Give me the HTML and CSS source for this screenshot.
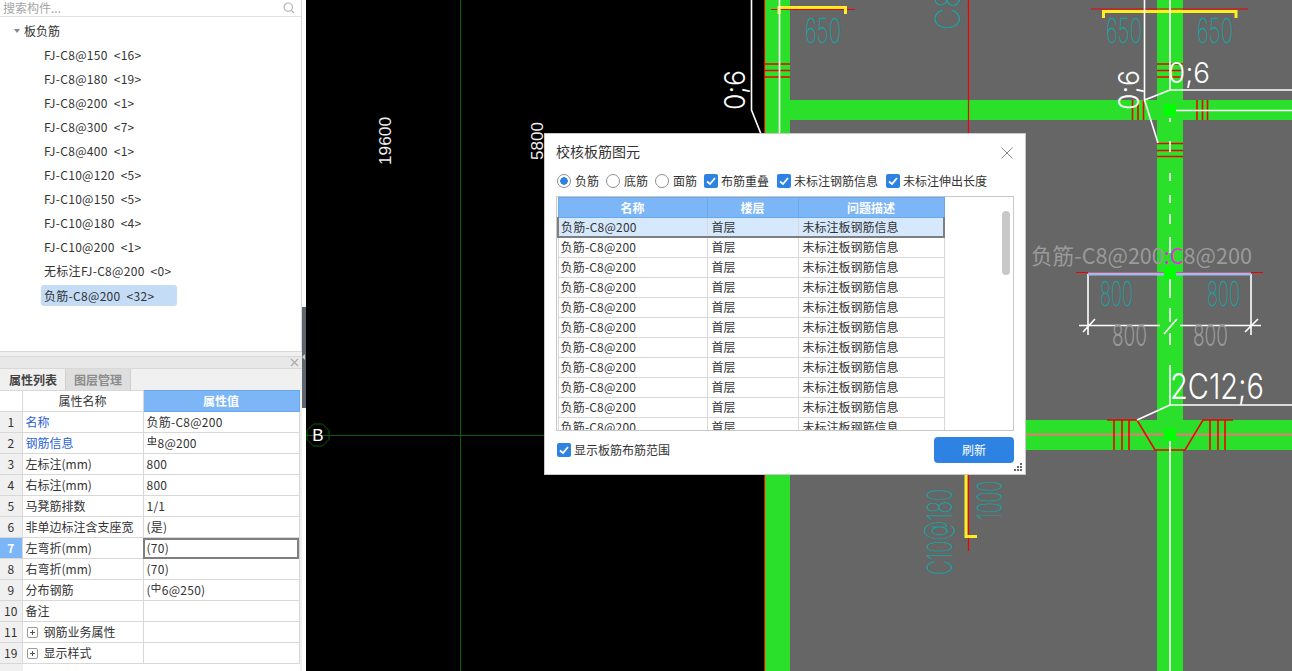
FILE: index.html
```html
<!DOCTYPE html>
<html lang="zh-CN">
<head>
<meta charset="utf-8">
<title>校核板筋图元</title>
<link rel="stylesheet" href="styles.css">
</head>
<body>
<div class="app">
  <aside class="side">
    <section class="tree-panel">
      <div class="search">
        <span class="search-text">搜索构件...</span>
        <svg class="search-icon" width="12" height="12" viewBox="0 0 12 12"><circle cx="5.2" cy="5.2" r="4.2"/><path d="M8.2 8.2L11 11"/></svg>
      </div>
      <div class="tree">
        <div class="tree-root"><span class="caret"></span>板负筋</div>
        <div class="tree-item">FJ-C8@150 &lt;16&gt;</div>
        <div class="tree-item">FJ-C8@180 &lt;19&gt;</div>
        <div class="tree-item">FJ-C8@200 &lt;1&gt;</div>
        <div class="tree-item">FJ-C8@300 &lt;7&gt;</div>
        <div class="tree-item">FJ-C8@400 &lt;1&gt;</div>
        <div class="tree-item">FJ-C10@120 &lt;5&gt;</div>
        <div class="tree-item">FJ-C10@150 &lt;5&gt;</div>
        <div class="tree-item">FJ-C10@180 &lt;4&gt;</div>
        <div class="tree-item">FJ-C10@200 &lt;1&gt;</div>
        <div class="tree-item">无标注FJ-C8@200 &lt;0&gt;</div>
        <div class="tree-item selected">负筋-C8@200 &lt;32&gt;</div>
      </div>
    </section>
    <section class="prop-panel">
      <div class="prop-strip"><svg width="9" height="9" viewBox="0 0 9 9"><path d="M1 1L8 8M8 1L1 8"/></svg></div>
      <div class="tabs">
        <div class="tab active">属性列表</div>
        <div class="tab">图层管理</div>
      </div>
      <table class="props">
        <colgroup><col class="c-no"><col class="c-name"><col class="c-val"></colgroup>
        <thead><tr><th class="no"></th><th class="name-h">属性名称</th><th class="val-h">属性值</th></tr></thead>
        <tbody>
          <tr><td class="no">1</td><td class="link">名称</td><td class="val">负筋-C8@200</td></tr>
          <tr><td class="no">2</td><td class="link">钢筋信息</td><td class="val"><svg class="bar" width="10" height="10" viewBox="0 0 10 10"><path d="M5 0V8M1.5 2.5H8.5V6H1.5ZM.5 8.5H9.5"/></svg>8@200</td></tr>
          <tr><td class="no">3</td><td>左标注(mm)</td><td class="val">800</td></tr>
          <tr><td class="no">4</td><td>右标注(mm)</td><td class="val">800</td></tr>
          <tr><td class="no">5</td><td>马凳筋排数</td><td class="val">1/1</td></tr>
          <tr><td class="no">6</td><td>非单边标注含支座宽</td><td class="val">(是)</td></tr>
          <tr><td class="no current">7</td><td>左弯折(mm)</td><td class="val editing">(70)</td></tr>
          <tr><td class="no">8</td><td>右弯折(mm)</td><td class="val">(70)</td></tr>
          <tr><td class="no">9</td><td>分布钢筋</td><td class="val">(<svg class="bar" width="10" height="10" viewBox="0 0 10 10"><path d="M5 0V9.5M1 2.5H9V6.5H1Z"/></svg>6@250)</td></tr>
          <tr><td class="no">10</td><td>备注</td><td></td></tr>
          <tr><td class="no">11</td><td><span class="plus"></span>钢筋业务属性</td><td></td></tr>
          <tr><td class="no">19</td><td><span class="plus"></span>显示样式</td><td></td></tr>
        </tbody>
      </table>
      <div class="prop-rest"><span></span></div>
    </section>
  </aside>
  <div class="splitter"><div class="split-handle"><i></i></div></div>
  <main class="canvas">
    <svg class="drawing" width="986" height="671" viewBox="306 0 986 671">
      <rect x="306" y="0" width="986" height="671" fill="#000"/>
      <rect x="765" y="0" width="527" height="671" fill="#666"/>
      <!-- axes -->
      <path class="axis" d="M460.5 0V671M306 435.5H765"/>
      <polygon class="axis" points="313.5,424 322.5,424 329,430.500 329,439.500 322.5,446 313.5,446 307,439.500 307,430.500"/>
      <text class="bubble" x="318" y="441">B</text>
      <!-- beams -->
      <g fill="#2be02b">
        <rect x="765" y="0" width="25" height="671"/>
        <rect x="1157" y="0" width="26" height="671"/>
        <rect x="790" y="100" width="502" height="20"/>
        <rect x="765" y="420" width="527" height="30"/>
      </g>
      <path class="pink" d="M765 434.500H1292"/>
      <!-- red lines -->
      <path class="red" d="M764.500 0V671M968.500 0V134M968.500 475V551"/>
      <path class="red th" d="M765 64H790M765 70.500H790M765 77H790M1157 64H1183M1157 70.500H1183M1157 77H1183M1157 143.500H1183M1157 150.500H1183M1157 156.500H1183"/>
      <path class="red th" d="M1132.500 100V120M1138 100V120M1143.500 100V120M1197 100V120M1202.500 100V120M1207.500 100V120"/>
      <path class="red" d="M771 9.500H855M1091 9H1248M1076 272.500H1263"/>
      <path class="red th" d="M1107 420H1137L1155 450H1185L1203 420H1233M1114 420V450M1122 420V450M1129 420V450M1210 420V450M1218 420V450M1225 420V450"/>
      <!-- yellow brackets -->
      <path class="yellow" d="M779 14V7.500H845.500V14M1103.500 18V11.500H1236V18M966 475V536.500H977"/>
      <!-- white lines -->
      <path class="white" d="M779.500 0V134M1170 0V90M1176 110.500H1292M751.500 0V110L761 134M1144.500 0V100L1170 90H1292M1144.500 100L1158 143M1170 365V405H1292M1170 405L1137 420M1170 441V671M1088 274V335M1251 274V335M1079 325.500H1160M1180 325.500H1261M1083 332L1095 319M1164 334L1177 319M1245 332L1258 319"/>
      <path class="white dash" d="M1170 118V122M1170 141V152M1170 173V181M1170 195V203M1170 214V224M1170 237V253M1170 279V298M1170 308V322M1170 333V345"/>
      <path class="blue-line" d="M1088 274H1251"/>
      <!-- nodes -->
      <g fill="#00ff00">
        <rect x="1164" y="104" width="12" height="12"/>
        <rect x="1164" y="267" width="12" height="12"/>
        <rect x="1164" y="429" width="12" height="12"/>
      </g>
      <!-- dimensions -->
      <text class="dim" transform="translate(391 165) rotate(-90)" textLength="48" lengthAdjust="spacingAndGlyphs">19600</text>
      <text class="dim" transform="translate(543 160) rotate(-90)" textLength="38" lengthAdjust="spacingAndGlyphs">5800</text>
      <!-- teal -->
      <g class="teal">
        <text x="805" y="43" textLength="36" lengthAdjust="spacingAndGlyphs">650</text>
        <text x="1106" y="43" textLength="36" lengthAdjust="spacingAndGlyphs">650</text>
        <text x="1197" y="43" textLength="36" lengthAdjust="spacingAndGlyphs">650</text>
        <text x="1100" y="306" textLength="33" lengthAdjust="spacingAndGlyphs">800</text>
        <text x="1207" y="306" textLength="33" lengthAdjust="spacingAndGlyphs">800</text>
        <text transform="translate(960 30) rotate(-90)" textLength="40" lengthAdjust="spacingAndGlyphs">C8</text>
        <text transform="translate(952 575) rotate(-90)" textLength="86" lengthAdjust="spacingAndGlyphs">C10@180</text>
        <text transform="translate(1002 520) rotate(-90)" textLength="39" lengthAdjust="spacingAndGlyphs">1000</text>
      </g>
      <!-- white annotations -->
      <g class="anno">
        <text x="1168" y="83" textLength="42" lengthAdjust="spacingAndGlyphs">0;6</text>
        <text transform="translate(1139 110) rotate(-90)" textLength="40" lengthAdjust="spacingAndGlyphs">0;6</text>
        <text transform="translate(745 110) rotate(-90)" textLength="40" lengthAdjust="spacingAndGlyphs">0;6</text>
        <text class="anno-lg" x="1170" y="399" textLength="94" lengthAdjust="spacingAndGlyphs">2C12;6</text>
      </g>
      <text class="grey" x="1031" y="264" textLength="221" lengthAdjust="spacingAndGlyphs">负筋-C8@200<tspan fill="#e22ee2">:C</tspan>8@200</text>
      <text class="grey-num" x="1112" y="346" textLength="35" lengthAdjust="spacingAndGlyphs">800</text>
      <text class="grey-num" x="1193" y="346" textLength="35" lengthAdjust="spacingAndGlyphs">800</text>
    </svg>

    <div class="dialog">
      <div class="dlg-title">
        <span class="dlg-name">校核板筋图元</span>
        <svg class="dlg-close" width="12" height="12" viewBox="0 0 12 12"><path d="M.5 .5L11.500 11.500M11.500 .5L.5 11.500"/></svg>
      </div>
      <div class="dlg-options">
        <label class="opt"><span class="radio on"></span>负筋</label>
        <label class="opt"><span class="radio"></span>底筋</label>
        <label class="opt"><span class="radio"></span>面筋</label>
        <label class="opt wide"><span class="check"><svg width="14" height="14" viewBox="0 0 14 14"><path d="M3 7.500L6 10L11 4"/></svg></span>布筋重叠</label>
        <label class="opt wide"><span class="check"><svg width="14" height="14" viewBox="0 0 14 14"><path d="M3 7.500L6 10L11 4"/></svg></span>未标注钢筋信息</label>
        <label class="opt wide"><span class="check"><svg width="14" height="14" viewBox="0 0 14 14"><path d="M3 7.500L6 10L11 4"/></svg></span>未标注伸出长度</label>
      </div>
      <div class="grid-box">
        <table class="grid">
          <colgroup><col class="g1"><col class="g2"><col class="g3"></colgroup>
          <thead><tr><th>名称</th><th>楼层</th><th>问题描述</th></tr></thead>
          <tbody>
            <tr class="sel"><td>负筋-C8@200</td><td>首层</td><td>未标注板钢筋信息</td></tr>
            <tr><td>负筋-C8@200</td><td>首层</td><td>未标注板钢筋信息</td></tr>
            <tr><td>负筋-C8@200</td><td>首层</td><td>未标注板钢筋信息</td></tr>
            <tr><td>负筋-C8@200</td><td>首层</td><td>未标注板钢筋信息</td></tr>
            <tr><td>负筋-C8@200</td><td>首层</td><td>未标注板钢筋信息</td></tr>
            <tr><td>负筋-C8@200</td><td>首层</td><td>未标注板钢筋信息</td></tr>
            <tr><td>负筋-C8@200</td><td>首层</td><td>未标注板钢筋信息</td></tr>
            <tr><td>负筋-C8@200</td><td>首层</td><td>未标注板钢筋信息</td></tr>
            <tr><td>负筋-C8@200</td><td>首层</td><td>未标注板钢筋信息</td></tr>
            <tr><td>负筋-C8@200</td><td>首层</td><td>未标注板钢筋信息</td></tr>
            <tr><td>负筋-C8@200</td><td>首层</td><td>未标注板钢筋信息</td></tr>
          </tbody>
        </table>
        <div class="scrollbar"></div>
      </div>
      <div class="dlg-foot">
        <label class="opt"><span class="check"><svg width="14" height="14" viewBox="0 0 14 14"><path d="M3 7.500L6 10L11 4"/></svg></span>显示板筋布筋范围</label>
        <button class="refresh" type="button">刷新</button>
      </div>
      <svg class="grip" width="8" height="8" viewBox="0 0 8 8"><path d="M6 0h2v2H6zM3 3h2v2H3zM6 3h2v2H6zM0 6h2v2H0zM3 6h2v2H3zM6 6h2v2H6z"/></svg>
    </div>
  </main>
</div>
</body>
</html>
```
FILE: styles.css
```css
* { box-sizing: border-box; }
html, body { margin: 0; padding: 0; height: 100%; overflow: hidden; }
body {
  font-family: "Noto Sans CJK SC", "Noto Sans", sans-serif;
  font-size: 12px;
  color: #333;
  background: #f0f0f0;
}
.app { display: flex; width: 1292px; height: 671px; }

/* left side */
.side { width: 302px; flex: none; display: flex; flex-direction: column; background: #f0f0f0; }
.tree-panel {
  height: 352px;
  background: #fff;
  border-right: 1px solid #d8d8d8;
  border-bottom: 1px solid #d8d8d8;
}
.search {
  height: 17px;
  display: flex;
  align-items: center;
  justify-content: space-between;
  padding: 0 6px 0 3px;
  border-bottom: 1px solid #e2e2e2;
}
.search-text { color: #a5a5a5; line-height: 16px; }
.search-icon { fill: none; stroke: #b5b5b5; stroke-width: 1.2; }
.tree { padding-top: 2px; }
.tree-root, .tree-item { height: 24px; line-height: 24px; white-space: pre-wrap; }
.tree-root { padding-left: 14px; display: flex; align-items: center; }
.caret {
  width: 0; height: 0;
  margin-right: 4px;
  border-left: 3px solid transparent;
  border-right: 3px solid transparent;
  border-top: 4px solid #888;
}
.tree-item { margin-left: 41px; padding-left: 3px; width: 136px; word-spacing: 3px; letter-spacing: .3px; }
.tree-item.selected { background: #c4dcf6; border-radius: 3px; height: 21px; line-height: 21px; margin-top: 2px; }

.prop-panel { margin-top: 4px; flex: 1; display: flex; flex-direction: column; border-top: 1px solid #d8d8d8; min-height: 0; }
.prop-strip {
  height: 11px;
  background: #e8e8e8;
  display: flex;
  justify-content: flex-end;
  align-items: center;
  padding-right: 3px;
}
.prop-strip svg { fill: none; stroke: #aaa; stroke-width: 1.2; }
.tabs { height: 22px; display: flex; background: #f0f0f0; border-top: 1px solid #d8d8d8; padding-left: 1px; }
.tab {
  width: 65px;
  text-align: center;
  line-height: 21px;
  font-weight: 700;
  color: #8c8c8c;
  background: #dedede;
  border-right: 1px solid #d0d0d0;
}
.tab.active { background: #f0f0f0; color: #444; width: 65px; border-right: 1px solid #d0d0d0; }

.props { border-collapse: collapse; table-layout: fixed; width: 299px; background: #fff; }
.c-no { width: 22px; } .c-name { width: 121px; } .c-val { width: 156px; }
.props th, .props td {
  height: 21px;
  padding: 0 0 0 3px;
  border: 1px solid #d8d8d8;
  font-weight: 400;
  white-space: nowrap;
  overflow: hidden;
  line-height: 18px;
}
.props th { text-align: center; padding: 0; }
.props .no { background: #f0f0f0; text-align: center; padding: 0; border-left: 0; }
.props thead .no { background: #fff; }
.props .val-h { background: #7cb6f7; color: #fff; font-weight: 700; border-color: #6aa8ee; }
.props .link { color: #2a62d9; }
.props .val { letter-spacing: .25px; }
.props .current { background: #7cb6f7; color: #fff; font-weight: 700; }
.props .editing { outline: 2px solid #7f7f7f; outline-offset: -2px; }
.bar { fill: none; stroke: #444; stroke-width: 1; vertical-align: 2px; margin-right: 1px; }
.plus {
  display: inline-block;
  width: 11px; height: 11px;
  margin: 0 6px 0 1px;
  vertical-align: -1px;
  border: 1px solid #999;
  border-radius: 2px;
  background:
    linear-gradient(#555, #555) center / 5px 1px no-repeat,
    linear-gradient(#555, #555) center / 1px 5px no-repeat;
}
.prop-rest { flex: 1; display: flex; width: 300px; background: #fff; }
.prop-rest span { width: 23px; background: #f0f0f0; }

.splitter { width: 4px; flex: none; background: #fff; position: relative; }
.split-handle { position: absolute; left: 0; top: 307px; width: 4px; height: 101px; background: #5c6670; display: flex; align-items: center; }
.split-handle i { border-right: 3px solid #c8c8c8; border-top: 3px solid transparent; border-bottom: 3px solid transparent; margin-top: -2px; }

/* canvas */
.canvas { flex: 1; position: relative; overflow: hidden; background: #000; }
.drawing { display: block; font-family: "Liberation Sans", sans-serif; }
.axis { fill: none; stroke: #0b5c0b; stroke-width: 1; }
.bubble { fill: #fff; font-size: 17px; text-anchor: middle; }
.pink { stroke: #e87878; stroke-width: 2; }
.red { fill: none; stroke: #f00000; stroke-width: 1.2; }
.red.th { stroke-width: 1.6; }
.yellow { fill: none; stroke: #ffee22; stroke-width: 3; }
.white { fill: none; stroke: #fff; stroke-width: 1.6; }
.dash { stroke-width: 1.6; }
.blue-line { stroke: #9dbcf0; stroke-width: 3; }
.dim { fill: #eee; font-size: 17px; }
.teal text { fill: #0fa8a8; stroke: #0fa8a8; stroke-width: .3; font-family: "Inter", "Roboto", sans-serif; font-weight: 100; font-size: 34px; }
.anno text { fill: #fff; font-family: "Inter", sans-serif; font-weight: 300; font-size: 29px; }
.anno .anno-lg { font-size: 36px; }
.grey { fill: #9a9a9a; font-size: 22px; font-family: "Noto Sans CJK SC", sans-serif; }
.grey-num { fill: #9a9a9a; font-family: "Inter", sans-serif; font-weight: 300; font-size: 30px; }

/* dialog */
.dialog {
  position: absolute;
  left: 238px; top: 133px;
  width: 482px; height: 342px;
  background: #fff;
  border: 1px solid #c8c8c8;
  padding: 0 11px;
  display: flex;
  flex-direction: column;
}
.dlg-title {
  height: 37px;
  flex: none;
  display: flex;
  align-items: center;
  justify-content: space-between;
  font-size: 14px;
  padding-right: 1px;
}
.dlg-name { padding-bottom: 3px; }
.dlg-close { fill: none; stroke: #888; stroke-width: 1; }
.dlg-options { display: flex; align-items: center; height: 19px; padding-left: 1px; }
.opt { display: flex; align-items: center; line-height: 16px; margin-right: 7px; white-space: nowrap; }
.opt.wide { margin-right: 8px; }
.radio {
  width: 14px; height: 14px;
  border: 1px solid #8f8f8f;
  border-radius: 50%;
  margin-right: 4px;
  flex: none;
  background: #fff;
}
.radio.on { background: radial-gradient(circle, #2e82e2 0 3.5px, #fff 4px); }
.check { width: 14px; height: 14px; background: #2e82e2; border-radius: 2px; margin-right: 3px; flex: none; }
.check svg { display: block; fill: none; stroke: #fff; stroke-width: 1.8; }
.grid-box {
  position: relative;
  margin-top: 6px;
  height: 235px;
  flex: none;
  border: 1px solid #c8c8c8;
  overflow: hidden;
}
.grid { border-collapse: collapse; table-layout: fixed; width: 386px; }
.g1 { width: 149px; } .g2 { width: 91px; } .g3 { width: 146px; }
.grid th {
  height: 20px;
  background: #7cb6f7;
  color: #fff;
  font-weight: 700;
  border: 1px solid #6aa8ee;
  text-align: center;
  padding: 0;
  line-height: 18px;
}
.grid td {
  height: 20px;
  padding: 0 0 0 4px;
  border: 1px solid #d8d8d8;
  line-height: 18px;
  white-space: nowrap;
}
.grid td:first-child { letter-spacing: .2px; padding-left: 2px; }
.grid .sel td { height: 19px; background: #d5e8fc; border-top-color: #7cb6f7; border-bottom: 2px solid #7f7f7f; }
.grid .sel td:first-child { border-left: 2px solid #7f7f7f; }
.grid .sel td:last-child { border-right: 2px solid #7f7f7f; }
.scrollbar { position: absolute; left: 445px; top: 14px; width: 8px; height: 64px; border-radius: 4px; background: #c8c8c8; }
.dlg-foot { display: flex; align-items: center; justify-content: space-between; margin-top: 5px; padding-left: 1px; height: 27px; }
.dlg-foot .opt { margin-right: 0; }
.refresh {
  width: 80px; height: 26px;
  border: 0;
  border-radius: 4px;
  background: #2e82e2;
  color: #fff;
  font: inherit;
  padding: 0;
}
.grip { position: absolute; right: 3px; bottom: 3px; fill: #666; }
```
